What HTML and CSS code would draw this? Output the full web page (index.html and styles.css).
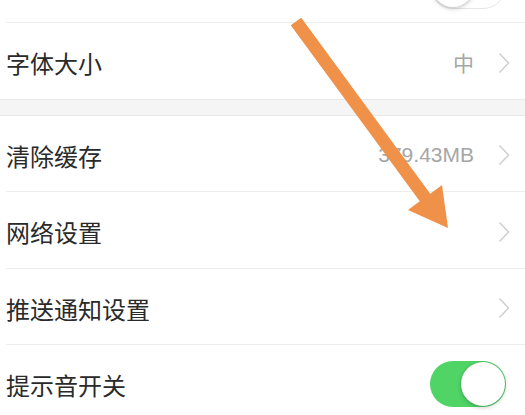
FILE: index.html
```html
<!DOCTYPE html>
<html lang="zh-CN">
<head>
<meta charset="utf-8">
<title>设置</title>
<link rel="stylesheet" href="styles.css">
</head>
<body>
<div class="page">
  <div class="group">
    <div class="row">
      <span class="label">夜间模式</span>
      <span class="switch off"><span class="knob"></span></span>
    </div>
    <div class="row last">
      <span class="label">字体大小</span>
      <span class="value">中</span>
      <svg class="chev" viewBox="0 0 12 22" width="12" height="22"><polyline points="1.5,1.5 10.5,11 1.5,20.5"/></svg>
    </div>
  </div>
  <div class="band"></div>
  <div class="group">
    <div class="row">
      <span class="label">清除缓存</span>
      <span class="value">379.43MB</span>
      <svg class="chev" viewBox="0 0 12 22" width="12" height="22"><polyline points="1.5,1.5 10.5,11 1.5,20.5"/></svg>
    </div>
    <div class="row">
      <span class="label">网络设置</span>
      <svg class="chev" viewBox="0 0 12 22" width="12" height="22"><polyline points="1.5,1.5 10.5,11 1.5,20.5"/></svg>
    </div>
    <div class="row">
      <span class="label">推送通知设置</span>
      <svg class="chev" viewBox="0 0 12 22" width="12" height="22"><polyline points="1.5,1.5 10.5,11 1.5,20.5"/></svg>
    </div>
    <div class="row last">
      <span class="label">提示音开关</span>
      <span class="switch on"><span class="knob"></span></span>
    </div>
  </div>
  <svg class="arrow" viewBox="0 0 525 415" width="525" height="415">
    <polygon points="290.75,25.3 301.25,17.7 430.25,193.7 442,185 448,228 408,210 419.75,201.3"/>
  </svg>
</div>
</body>
</html>
```

FILE: styles.css
```css
html, body {
  margin: 0;
  padding: 0;
  background: #ffffff;
  overflow: hidden;
}

body {
  width: 525px;
  height: 415px;
  font-family: "Noto Sans CJK SC", "Noto Sans", "Liberation Sans", sans-serif;
}

.page {
  position: relative;
  display: flex;
  flex-direction: column;
  width: 525px;
  height: 415px;
  overflow: hidden;
}

.group {
  display: flex;
  flex-direction: column;
  flex-shrink: 0;
}

.group:first-child {
  margin-top: -53.5px;
}

.row {
  display: flex;
  align-items: center;
  flex-shrink: 0;
  height: 75.5px;
  margin-left: 6px;
  padding-right: 15px;
  border-bottom: 1px solid #ededed;
}

.row.last {
  border-bottom: none;
}

.label {
  flex: 1;
  font-size: 24px;
  color: #2a2a2a;
  padding-top: 5px;
  line-height: 1;
}

.value {
  font-family: "Liberation Sans", "Noto Sans CJK SC", sans-serif;
  font-size: 21px;
  color: #a6a6a6;
  margin-right: 24px;
  padding-top: 3px;
}

.chev {
  fill: none;
  stroke: #cfcfcf;
  stroke-width: 1.5;
  margin-top: 4px;
}

.band {
  flex-shrink: 0;
  height: 15px;
  background: #f5f5f5;
  border-top: 1px solid #e9e9e9;
  border-bottom: 1px solid #e9e9e9;
}

.switch {
  display: flex;
  align-items: center;
  box-sizing: border-box;
  width: 76px;
  height: 46px;
  border-radius: 23px;
  margin-right: 4px;
  margin-top: 3px;
  padding: 1px;
}

.switch.off {
  background: #ffffff;
  border: 1px solid #e6e6e6;
  justify-content: flex-start;
}

.switch.on {
  background: #4fd465;
  justify-content: flex-end;
}

.knob {
  width: 44px;
  height: 44px;
  border-radius: 50%;
  background: #ffffff;
  box-shadow: 0 2px 4px rgba(0, 0, 0, 0.18), 0 0 0 1px rgba(0, 0, 0, 0.06);
}

.switch.off .knob {
  width: 42px;
  height: 42px;
}

.arrow {
  position: absolute;
  left: 0;
  top: 0;
  pointer-events: none;
}

.arrow polygon {
  fill: #ef9149;
}
```
